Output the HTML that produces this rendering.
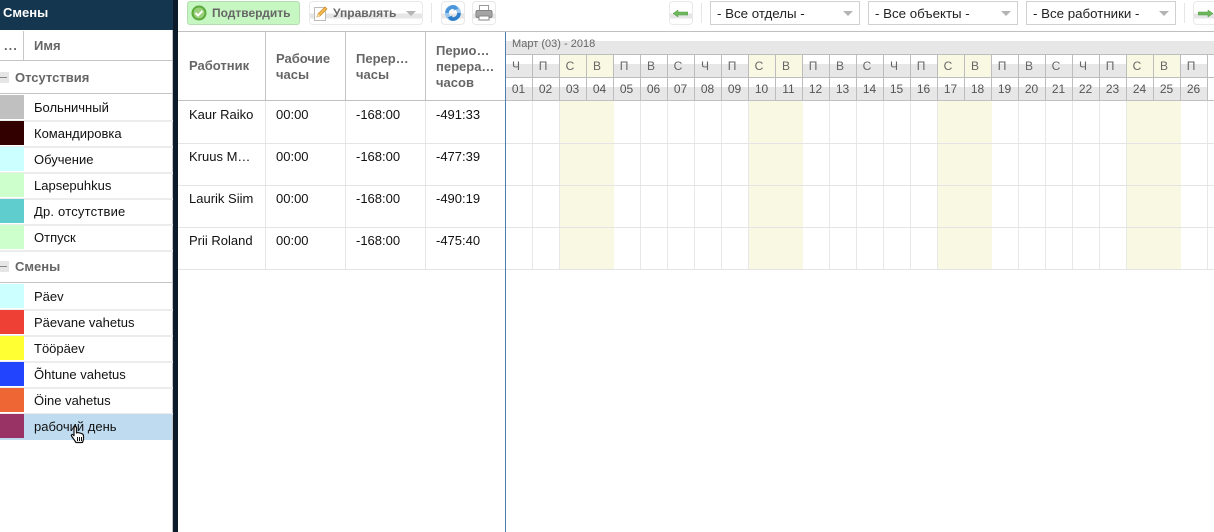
<!DOCTYPE html>
<html><head><meta charset="utf-8">
<style>
html,body{margin:0;padding:0;background:#fff}
#p{position:relative;width:1214px;height:532px;overflow:hidden;background:#fff;font-family:"Liberation Sans",sans-serif;font-size:13px;color:#111}
#p div,#p span.a{position:absolute;box-sizing:border-box}
.t{white-space:nowrap;line-height:16px}
.h{font-weight:bold;color:#666;white-space:nowrap;line-height:16px;font-size:13px}
.sw{left:0;width:24px;height:24px}
.sl{left:0;width:173px;height:2px;background:#ececec}
.n{left:34px;white-space:nowrap;line-height:16px;color:#111}
.btn{background:linear-gradient(#fff 0,#fff 52%,#e6e6e6 52%,#e6e6e6 76%,#fff 76%);border:1px solid #e9e9e9;border-radius:4px}
.sel{top:1px;height:24px;background:#fff;border:1px solid #d0d0d0;line-height:23px;padding-left:6px;font-size:13.3px;color:#222;white-space:nowrap}
.arr{width:0;height:0;border-left:5px solid transparent;border-right:5px solid transparent;border-top:5px solid #b4b4b4;top:11px}
.sep{top:3px;width:1px;height:20px;background:#e6e6e6}
.row{left:506px;width:708px;display:flex}
.c{flex:0 0 27px;width:27px;height:100%;text-align:center;box-sizing:border-box;border-right:1px solid #bdbdbd;color:#555;font-size:12px;line-height:22px;padding-right:1px}
.l{padding-right:6px;color:#666}
.d{background:linear-gradient(#fff 0,#fff 9px,#e7e7e7 9px)}
.w{background:#f9f9e3}
.b{flex:0 0 27px;width:27px;height:100%;box-sizing:border-box;border-right:1px solid #e8e8e8}
.by{background:#f9f9e3;border-right-color:#f9f9e3}
.hl{left:178px;width:1036px;height:1px;background:#e4e4e4}
</style></head><body><div id="p">

<!-- sidebar -->
<div style="left:0;top:0;width:173px;height:30px;background:#14374f"></div>
<div class="t" style="left:3px;top:5px;color:#fff;font-weight:bold">Смены</div>
<div style="left:173px;top:0;width:5px;height:532px;background:#0c1b29"></div>
<div style="left:172px;top:30px;width:1px;height:502px;background:#c4c4c4"></div>
<div class="h" style="left:4px;top:38px;letter-spacing:1px">...</div>
<div style="left:23px;top:31px;width:1px;height:29px;background:#c8c8c8"></div>
<div class="h" style="left:34px;top:38px">Имя</div>
<div style="left:0;top:60px;width:173px;height:1px;background:#c4c4c4"></div>
<div style="left:0;top:72px;width:9px;height:11px;background:#e6e6e6"></div>
<div style="left:0;top:77px;width:7px;height:1px;background:#888"></div>
<div class="h" style="left:15px;top:70px">Отсутствия</div>
<div style="left:0;top:93px;width:173px;height:1px;background:#c4c4c4"></div>

<div class="sw" style="top:95px;background:#c0c0c0"></div><div class="n" style="top:100px">Больничный</div><div class="sl" style="top:120px"></div>
<div class="sw" style="top:121px;background:#330000"></div><div class="n" style="top:126px">Командировка</div><div class="sl" style="top:146px"></div>
<div class="sw" style="top:147px;background:#ccffff"></div><div class="n" style="top:152px">Обучение</div><div class="sl" style="top:172px"></div>
<div class="sw" style="top:173px;background:#ccffcc"></div><div class="n" style="top:178px">Lapsepuhkus</div><div class="sl" style="top:198px"></div>
<div class="sw" style="top:199px;background:#5fcdcd"></div><div class="n" style="top:204px;letter-spacing:.2px">Др. отсутствие</div><div class="sl" style="top:224px"></div>
<div class="sw" style="top:225px;background:#ccffcc"></div><div class="n" style="top:230px">Отпуск</div><div class="sl" style="top:250px"></div>

<div style="left:0;top:261px;width:9px;height:11px;background:#e6e6e6"></div>
<div style="left:0;top:266px;width:7px;height:1px;background:#888"></div>
<div class="h" style="left:15px;top:259px">Смены</div>
<div style="left:0;top:282px;width:173px;height:1px;background:#c4c4c4"></div>

<div class="sw" style="top:284px;background:#ccffff"></div><div class="n" style="top:289px">Päev</div><div class="sl" style="top:309px"></div>
<div class="sw" style="top:310px;background:#ee4035"></div><div class="n" style="top:315px">Päevane vahetus</div><div class="sl" style="top:335px"></div>
<div class="sw" style="top:336px;background:#ffff33"></div><div class="n" style="top:341px">Tööpäev</div><div class="sl" style="top:361px"></div>
<div class="sw" style="top:362px;background:#2244ff"></div><div class="n" style="top:367px">Õhtune vahetus</div><div class="sl" style="top:387px"></div>
<div class="sw" style="top:388px;background:#ee6633"></div><div class="n" style="top:393px">Öine vahetus</div><div class="sl" style="top:413px"></div>
<div style="left:0;top:414px;width:172px;height:26px;background:#bfdbf0"></div>
<div class="sw" style="top:414px;background:#993366"></div><div class="n" style="top:419px">рабочий день</div>
<svg style="position:absolute;left:70px;top:425px" width="17" height="20" viewBox="0 0 17 20"><path d="M5 1.500c1 0 1.500.7 1.500 1.500v5l1-.5 1 .2 1 .2 1 .3 1.500.5c1 .5 1.500 1.200 1.500 2.300v3.500l-1 3H6l-2-3-2.500-3.500c-.6-1 .5-2 1.500-1.300l1 1V3c0-.8.500-1.500 1-1.500z" fill="#fff" stroke="#111" stroke-width="1.200" stroke-linejoin="round"/><path d="M7.500 12v4M9.500 12v4M11.500 12v4" stroke="#111" stroke-width="1"/></svg>

<!-- toolbar -->
<div style="left:187px;top:1px;width:113px;height:24px;background:#c6f6c2;border:1px solid #b4dcb0;border-radius:3px"></div>
<svg style="position:absolute;left:191px;top:5px" width="16" height="16" viewBox="0 0 16 16"><circle cx="8" cy="8" r="7.500" fill="#5aaa3c"/><circle cx="8" cy="8" r="5.500" fill="#9ad07a"/><path d="M4.500 8l2.500 2.500 4.500-4.500" fill="none" stroke="#fff" stroke-width="2"/></svg>
<div class="h" style="left:212px;top:5px;font-size:12px">Подтвердить</div>

<div class="btn" style="left:309px;top:1px;width:114px;height:24px"></div>
<svg style="position:absolute;left:313px;top:5px" width="16" height="17" viewBox="0 0 16 17"><rect x="1.500" y="2.500" width="11" height="13" fill="#fff" stroke="#bbb"/><path d="M4 12l1-3 7-7 2 2-7 7z" fill="#f2b84b" stroke="#c98a2a" stroke-width=".7"/><path d="M4 12l1-3 2 2z" fill="#f5dfb0"/></svg>
<div class="h" style="left:333px;top:5px;font-size:12px">Управлять</div>
<div class="arr" style="left:406px;top:11px"></div>
<div class="sep" style="left:431px"></div>

<div class="btn" style="left:441px;top:1px;width:24px;height:24px"></div>
<svg style="position:absolute;left:444px;top:4px" width="18" height="18" viewBox="0 0 18 18"><circle cx="9" cy="9" r="6" fill="none" stroke="#9cc8ee" stroke-width="4"/><path d="M3 9a6 6 0 0 1 9-5.200" fill="none" stroke="#4a97dc" stroke-width="3.500"/><path d="M15 9a6 6 0 0 1-9 5.200" fill="none" stroke="#2f7fc8" stroke-width="3.500"/><path d="M10.500 1l4 3.500-5 2z" fill="#4a97dc"/><path d="M7.500 17l-4-3.500 5-2z" fill="#2f7fc8"/></svg>
<div class="btn" style="left:472px;top:1px;width:24px;height:24px"></div>
<svg style="position:absolute;left:475px;top:4px" width="18" height="18" viewBox="0 0 18 18"><rect x="4.500" y="1.500" width="9" height="6" fill="#fff" stroke="#999"/><rect x="1" y="6.500" width="16" height="7" rx="1.500" fill="#a4a4a4" stroke="#848484"/><rect x="4" y="12" width="10" height="4" fill="#fff" stroke="#848484"/></svg>

<div class="btn" style="left:669px;top:1px;width:24px;height:24px"></div>
<svg style="position:absolute;left:673px;top:9px" width="15" height="9" viewBox="0 0 15 9"><path d="M0 4.500L5 1v2h10v3H5v2z" fill="#6fb85c" stroke="#4f9a40" stroke-width=".5"/></svg>
<div class="sep" style="left:701px"></div>

<div class="sel" style="left:710px;width:150px">- Все отделы -</div>
<div class="arr" style="left:843px"></div>
<div class="sel" style="left:868px;width:150px">- Все объекты -</div>
<div class="arr" style="left:1001px"></div>
<div class="sel" style="left:1026px;width:150px">- Все работники -</div>
<div class="arr" style="left:1159px"></div>
<div class="sep" style="left:1184px"></div>
<div class="btn" style="left:1193px;top:1px;width:30px;height:24px"></div>
<svg style="position:absolute;left:1198px;top:9px" width="15" height="9" viewBox="0 0 15 9"><path d="M15 4.500L10 1v2H0v3h10v2z" fill="#6fb85c" stroke="#4f9a40" stroke-width=".5"/></svg>

<!-- table left -->
<div style="left:178px;top:31px;width:1036px;height:1px;background:#c0c0c0"></div>
<div style="left:178px;top:100px;width:1036px;height:1px;background:#c0c0c0"></div>
<div style="left:265px;top:32px;width:1px;height:68px;background:#c4c4c4"></div>
<div style="left:345px;top:32px;width:1px;height:68px;background:#c4c4c4"></div>
<div style="left:425px;top:32px;width:1px;height:68px;background:#c4c4c4"></div>
<div style="left:265px;top:101px;width:1px;height:168px;background:#e6e6e6"></div>
<div style="left:345px;top:101px;width:1px;height:168px;background:#e6e6e6"></div>
<div style="left:425px;top:101px;width:1px;height:168px;background:#e6e6e6"></div>
<div class="h" style="left:189px;top:58px">Работник</div>
<div class="h" style="left:276px;top:51px">Рабочие<br>часы</div>
<div class="h" style="left:356px;top:51px">Перер…<br>часы</div>
<div class="h" style="left:436px;top:43px">Перио…<br>перера…<br>часов</div>

<div class="t" style="left:189px;top:107px">Kaur Raiko</div><div class="t" style="left:276px;top:107px">00:00</div><div class="t" style="left:356px;top:107px">-168:00</div><div class="t" style="left:436px;top:107px">-491:33</div>
<div class="t" style="left:189px;top:149px">Kruus M…</div><div class="t" style="left:276px;top:149px">00:00</div><div class="t" style="left:356px;top:149px">-168:00</div><div class="t" style="left:436px;top:149px">-477:39</div>
<div class="t" style="left:189px;top:191px">Laurik Siim</div><div class="t" style="left:276px;top:191px">00:00</div><div class="t" style="left:356px;top:191px">-168:00</div><div class="t" style="left:436px;top:191px">-490:19</div>
<div class="t" style="left:189px;top:233px">Prii Roland</div><div class="t" style="left:276px;top:233px">00:00</div><div class="t" style="left:356px;top:233px">-168:00</div><div class="t" style="left:436px;top:233px">-475:40</div>

<!-- calendar -->
<div style="left:506px;top:41px;width:708px;height:13px;background:#e7e7e7"></div>
<div class="t" style="left:512px;top:36px;font-size:11px;color:#666">Март (03) - 2018</div>
<div style="left:506px;top:54px;width:708px;height:1px;background:#bdbdbd"></div>
<div style="left:506px;top:77px;width:708px;height:1px;background:#bdbdbd"></div>

<div class="row" style="top:55px;height:22px">
<span class="c l d">Ч</span><span class="c l d">П</span><span class="c l w">С</span><span class="c l w">В</span><span class="c l d">П</span><span class="c l d">В</span><span class="c l d">С</span><span class="c l d">Ч</span><span class="c l d">П</span><span class="c l w">С</span><span class="c l w">В</span><span class="c l d">П</span><span class="c l d">В</span><span class="c l d">С</span><span class="c l d">Ч</span><span class="c l d">П</span><span class="c l w">С</span><span class="c l w">В</span><span class="c l d">П</span><span class="c l d">В</span><span class="c l d">С</span><span class="c l d">Ч</span><span class="c l d">П</span><span class="c l w">С</span><span class="c l w">В</span><span class="c l d">П</span>
</div>
<div class="row" style="top:78px;height:22px">
<span class="c d">01</span><span class="c d">02</span><span class="c d">03</span><span class="c d">04</span><span class="c d">05</span><span class="c d">06</span><span class="c d">07</span><span class="c d">08</span><span class="c d">09</span><span class="c d">10</span><span class="c d">11</span><span class="c d">12</span><span class="c d">13</span><span class="c d">14</span><span class="c d">15</span><span class="c d">16</span><span class="c d">17</span><span class="c d">18</span><span class="c d">19</span><span class="c d">20</span><span class="c d">21</span><span class="c d">22</span><span class="c d">23</span><span class="c d">24</span><span class="c d">25</span><span class="c d">26</span>
</div>
<div class="row" style="top:101px;height:168px">
<span class="b"></span><span class="b"></span><span class="b by"></span><span class="b by"></span><span class="b"></span><span class="b"></span><span class="b"></span><span class="b"></span><span class="b"></span><span class="b by"></span><span class="b by"></span><span class="b"></span><span class="b"></span><span class="b"></span><span class="b"></span><span class="b"></span><span class="b by"></span><span class="b by"></span><span class="b"></span><span class="b"></span><span class="b"></span><span class="b"></span><span class="b"></span><span class="b by"></span><span class="b by"></span><span class="b"></span>
</div>
<div class="hl" style="top:143px"></div>
<div class="hl" style="top:185px"></div>
<div class="hl" style="top:227px"></div>
<div class="hl" style="top:269px"></div>
<div style="left:505px;top:32px;width:1px;height:500px;background:#4a7fb0"></div>
</div></body></html>
